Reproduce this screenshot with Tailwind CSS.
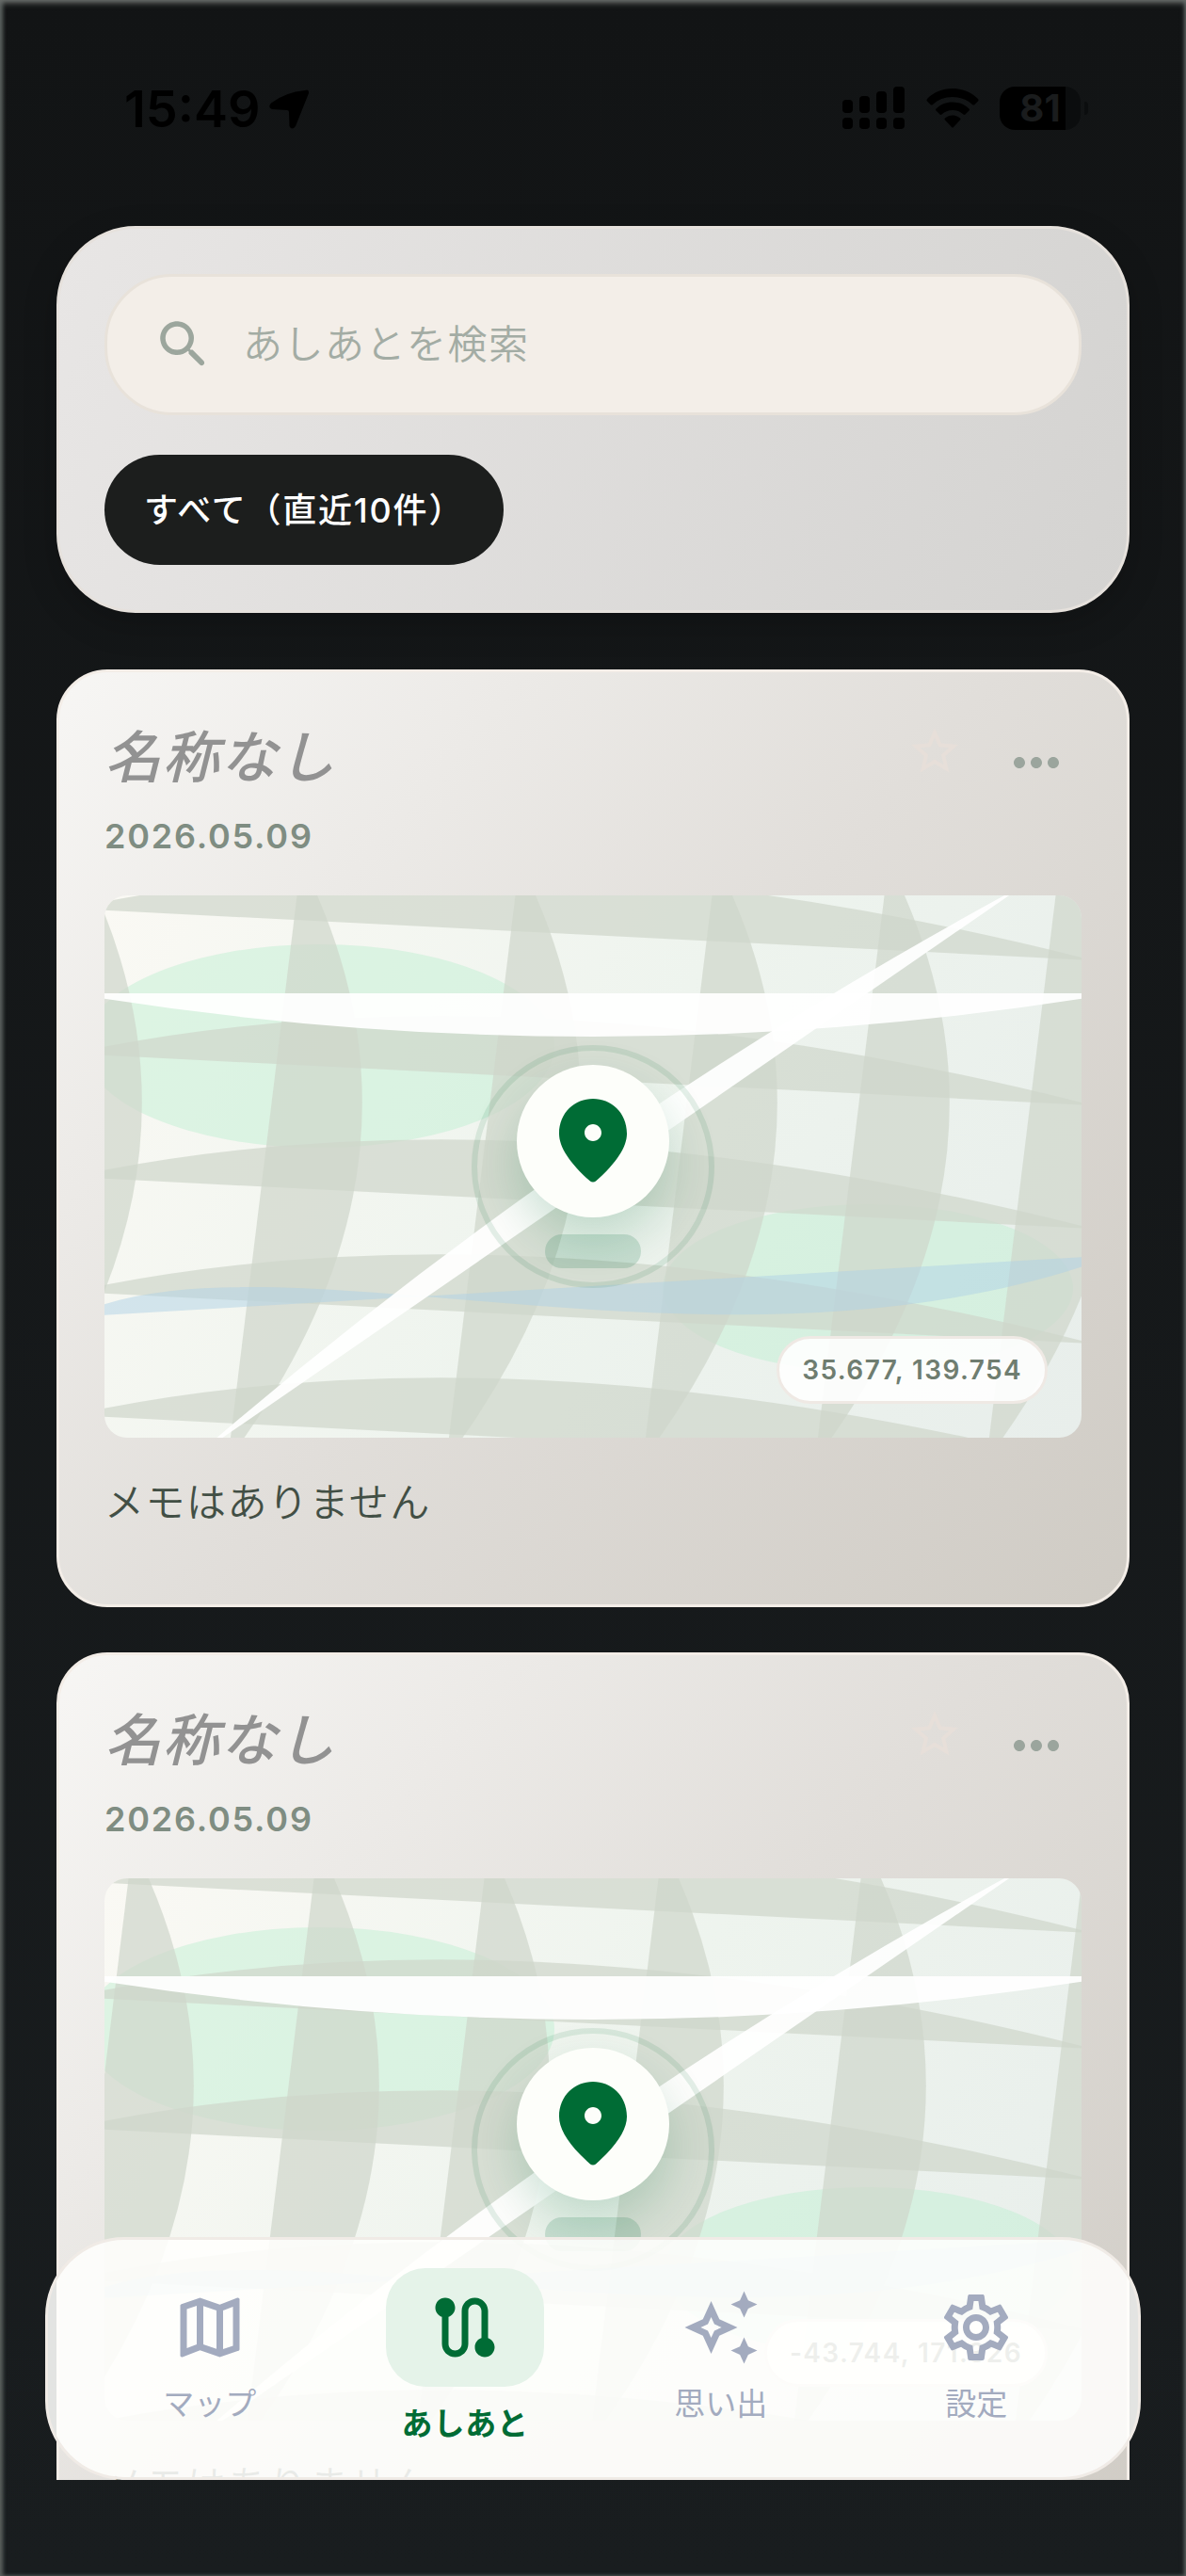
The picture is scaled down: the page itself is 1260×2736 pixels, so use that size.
<!DOCTYPE html>
<html lang="ja">

<head>
  <meta charset="UTF-8">
  <meta name="viewport" content="width=device-width, initial-scale=1.0">
  <title>あしあと</title>
  <script src="https://cdn.jsdelivr.net/npm/@tailwindcss/browser@4"></script>
</head>

<body class="font-['Inter','Noto_Sans_CJK_JP',sans-serif] bg-[#15181a]">
  <!-- Shared map shapes -->
  <svg class="hidden" aria-hidden="true">
    <defs>
      <path id="street-h" d="M-36 -2Q436 -103 1050 53Z" />
      <path id="street-v" d="M4 -36Q165 282 -74 600Z" />
      <g id="parks" fill="#c2efd4" fill-opacity="0.5">
        <ellipse cx="228" cy="160" rx="250" ry="108" />
        <ellipse cx="811" cy="417" rx="218" ry="89" />
      </g>
      <path id="river" fill="#b0d2e6" fill-opacity="0.5" d="M-36 448C180 345 654 537 1074 382Z" />
      <g id="avenues" fill="#fff" fill-opacity="0.93">
        <path d="M-36 104Q519 196 1074 104Z" />
        <path d="M95 597Q500 246 980 -13Z" />
      </g>
      <path id="pin" d="M12 12c1.1 0 2-.9 2-2s-.9-2-2-2-2 .9-2 2 .9 2 2 2zm0-10c4.2 0 8 3.22 8 8.2 0 3.18-2.45 6.92-7.34 11.23-.38.33-.95.33-1.33 0C6.45 17.12 4 13.38 4 10.2 4 5.22 7.8 2 12 2z" />
      <path id="star" d="M22 9.24l-7.19-.62L12 2 9.19 8.63 2 9.24l5.46 4.73L5.82 21 12 17.27 18.18 21l-1.63-7.03L22 9.24zM12 15.4l-3.76 2.27 1-4.28-3.32-2.88 4.38-.38L12 6.1l1.71 4.04 4.38.38-3.32 2.88 1 4.28L12 15.4z" />
      <path id="more" d="M6 10c-1.1 0-2 .9-2 2s.9 2 2 2 2-.9 2-2-.9-2-2-2zm12 0c-1.1 0-2 .9-2 2s.9 2 2 2 2-.9 2-2-.9-2-2-2zm-6 0c-1.1 0-2 .9-2 2s.9 2 2 2 2-.9 2-2-.9-2-2-2z" />
    </defs>
  </svg>

  <div class="relative flex h-screen flex-col bg-linear-to-b from-[#121415] to-[#191d1f] pb-[102px] shadow-[inset_0_3px_6px_#6b6f6c,inset_3px_0_4px_#4a504f,inset_-2px_0_3px_#3a4040]">
    <!-- Status bar -->
    <header class="flex h-60 shrink-0 items-start justify-between pl-[132px] pr-[104px] pt-[84px]">
      <div class="flex items-center gap-2 text-black">
        <span class="text-[54px]/[64px] font-semibold">15:49</span>
        <svg class="size-11" viewBox="0 0 44 44" fill="currentColor" aria-hidden="true">
          <path d="M39 2Q43.500 0 43 5L29 40Q25 45 22.500 40L22 25Q22 23 20 23L4 22Q-1 20 3 15.500Q18 4 39 2Z" />
        </svg>
      </div>
      <div class="flex items-center gap-[22px] pt-2 text-black">
        <svg class="h-[46px] w-[67px]" viewBox="0 0 67 46" fill="currentColor" aria-hidden="true">
          <rect x="0" y="14" width="11" height="14" rx="4" />
          <rect x="18" y="10" width="11" height="18" rx="4" />
          <rect x="36" y="5" width="11" height="23" rx="4" />
          <rect x="54" y="0" width="12" height="28" rx="4" />
          <rect x="0" y="33" width="11" height="12" rx="4" />
          <rect x="18" y="33" width="11" height="12" rx="4" />
          <rect x="36" y="33" width="11" height="12" rx="4" />
          <rect x="54" y="33" width="12" height="12" rx="4" />
        </svg>
        <svg class="h-[42px] w-14" viewBox="0 0 56 42" fill="currentColor" aria-hidden="true">
          <path d="M28 0C39 0 48.500 4.300 55 11Q56 12.500 55 13.500L51.500 17Q50.500 18 49 17C43.500 11.800 36.500 9 28 9S12.500 11.800 7 17Q5.500 18 4.500 17L1 13.500Q0 12.500 1 11C7.500 4.300 17 0 28 0Z" />
          <path d="M28 14.500C35 14.500 41 17 45.500 21.500Q46.500 22.500 45.500 23.500L41.500 27.500Q40.500 28.300 39.500 27.500C36.300 24.500 32.500 23 28 23S19.700 24.500 16.500 27.500Q15.500 28.300 14.500 27.500L10.500 23.500Q9.500 22.500 10.500 21.500C15 17 21 14.500 28 14.500Z" />
          <path d="M28 28.500C31 28.500 33.700 29.600 36 31.500Q37 32.500 36 33.500L29 41Q28 42 27 41L20 33.500Q19 32.500 20 31.500C22.300 29.600 25 28.500 28 28.500Z" />
        </svg>
        <div class="flex items-center gap-1">
          <div class="flex h-[46px] w-[86px] items-center justify-center rounded-2xl bg-linear-to-r from-black from-81% to-[#0b0d0e] to-81% text-[40px]/[46px] font-bold text-[#1a1c1d]">81</div>
          <div class="h-[14px] w-1 rounded-r-full bg-[#0b0d0e]"></div>
        </div>
      </div>
    </header>

    <main class="flex min-h-0 flex-1 flex-col px-[60px]">
      <!-- Search and filter -->
      <section class="shrink-0 rounded-[84px] border-3 border-[#e6e1dc] bg-linear-110 from-[#e8e6e5] to-[#d4d3d1] p-12 shadow-[0_12px_36px_rgba(0,0,0,0.2)]">
        <label class="flex h-[150px] items-center gap-[30px] rounded-[72px] border-3 border-[#e8e2da] bg-[#f3eee8] px-12">
          <svg class="size-[66px] shrink-0 text-[#9ca69d]" viewBox="0 0 24 24" fill="currentColor" aria-hidden="true">
            <path d="M15.5 14h-.79l-.28-.27c1.2-1.4 1.82-3.31 1.48-5.34-.47-2.78-2.79-5-5.59-5.34-4.23-.52-7.79 3.04-7.27 7.27.34 2.8 2.56 5.12 5.34 5.59 2.03.34 3.94-.28 5.34-1.48l.27.28v.79l4.25 4.25c.41.41 1.08.41 1.49 0 .41-.41.41-1.08 0-1.49L15.5 14zm-6 0C7.01 14 5 11.99 5 9.5S7.01 5 9.5 5 14 7.01 14 9.5 11.99 14 9.5 14z" />
          </svg>
          <input type="search" aria-label="あしあとを検索" placeholder="あしあとを検索" class="min-w-0 flex-1 text-[42px]/[66px] font-[350] tracking-[1.5px] text-[#424f45] outline-none placeholder:text-[#a3aca4]">
        </label>
        <button type="button" class="mt-[42px] block h-[117px] rounded-full bg-[#1c1e1d] px-[42px] text-[36px]/[54px] font-medium tracking-wider text-white">すべて（直近10件）</button>
      </section>

      <!-- Footprint list -->
      <div class="-mx-[60px] mt-[60px] flex min-h-0 flex-1 flex-col gap-12 overflow-hidden px-[60px]">
        <article class="shrink-0 rounded-[54px] border-3 border-[#f3ede7] bg-linear-131 from-[#f7f6f4] via-[#e1deda] to-[#cfcbc4] px-12 pb-[75px] pt-12">
          <div class="flex items-start justify-between">
            <div>
              <h2 class="text-[60px]/[84px] font-medium italic tracking-wide text-[#929292]">名称なし</h2>
              <p class="mt-[18px] text-[36px]/[48px] font-semibold tracking-wider text-[#7f8d82]">2026.05.09</p>
            </div>
            <div class="flex gap-3">
              <button type="button" aria-label="お気に入り" class="flex h-[72px] w-24 items-center justify-center text-[#e7dfd9]">
                <svg class="size-[60px]" viewBox="0 0 24 24" fill="currentColor"><use href="#star" /></svg>
              </button>
              <button type="button" aria-label="メニュー" class="flex size-24 items-center justify-center text-[#9ba59d]">
                <svg class="size-[72px]" viewBox="0 0 24 24" fill="currentColor"><use href="#more" /></svg>
              </button>
            </div>
          </div>
          <div class="relative mt-[39px] h-[576px] overflow-hidden rounded-3xl bg-linear-119 from-[#faf9f4] via-[#eef4ee] to-[#e8eeeb]">
            <svg class="size-full" viewBox="0 0 1038 576" preserveAspectRatio="none" aria-hidden="true">
              <use href="#parks" />
              <g fill="#cfd5cb" fill-opacity="0.7">
                <use href="#street-h" y="16" />
                <use href="#street-h" y="170" />
                <use href="#street-h" y="301" />
                <use href="#street-h" y="423" />
                <use href="#street-h" y="554" />
                <use href="#street-v" x="-29" />
                <use href="#street-v" x="205" />
                <use href="#street-v" x="437" />
                <use href="#street-v" x="646" />
                <use href="#street-v" x="829" />
                <use href="#street-v" x="1011" />
              </g>
              <use href="#river" />
              <use href="#avenues" />
            </svg>
            <div class="absolute inset-0 flex items-center justify-center">
              <div class="flex size-[258px] flex-col items-center justify-center gap-[18px] rounded-full border-6 border-[#006c35]/10">
                <div class="flex size-[162px] items-center justify-center rounded-full bg-[#fdfefa] shadow-[0_24px_54px_rgba(0,108,53,0.2)]">
                  <svg class="size-[108px] text-[#006c35]" viewBox="0 0 24 24" fill="currentColor" aria-hidden="true"><use href="#pin" /></svg>
                </div>
                <div class="h-9 w-[102px] rounded-full bg-[#006c35]/16"></div>
              </div>
            </div>
            <p class="absolute bottom-9 right-9 flex h-[72px] items-center rounded-full border-3 border-[#efe9e4] bg-white/90 px-6 text-[28px]/[36px] font-semibold tracking-wider text-[#6f7d70]">35.677, 139.754</p>
          </div>
          <p class="mt-9 text-[42px]/[66px] font-[350] tracking-[1.5px] text-[#424f45]">メモはありません</p>
        </article>

        <article class="shrink-0 rounded-[54px] border-3 border-[#f3ede7] bg-linear-131 from-[#f7f6f4] via-[#e1deda] to-[#cfcbc4] px-12 pb-[75px] pt-12">
          <div class="flex items-start justify-between">
            <div>
              <h2 class="text-[60px]/[84px] font-medium italic tracking-wide text-[#929292]">名称なし</h2>
              <p class="mt-[18px] text-[36px]/[48px] font-semibold tracking-wider text-[#7f8d82]">2026.05.09</p>
            </div>
            <div class="flex gap-3">
              <button type="button" aria-label="お気に入り" class="flex h-[72px] w-24 items-center justify-center text-[#e7dfd9]">
                <svg class="size-[60px]" viewBox="0 0 24 24" fill="currentColor"><use href="#star" /></svg>
              </button>
              <button type="button" aria-label="メニュー" class="flex size-24 items-center justify-center text-[#9ba59d]">
                <svg class="size-[72px]" viewBox="0 0 24 24" fill="currentColor"><use href="#more" /></svg>
              </button>
            </div>
          </div>
          <div class="relative mt-[39px] h-[576px] overflow-hidden rounded-3xl bg-linear-119 from-[#faf9f4] via-[#eef4ee] to-[#e8eeeb]">
            <svg class="size-full" viewBox="0 0 1038 576" preserveAspectRatio="none" aria-hidden="true">
              <use href="#parks" />
              <g fill="#cfd5cb" fill-opacity="0.7">
                <use href="#street-h" y="5" />
                <use href="#street-h" y="128" />
                <use href="#street-h" y="267" />
                <use href="#street-h" y="428" />
                <use href="#street-h" y="585" />
                <use href="#street-v" x="26" />
                <use href="#street-v" x="223" />
                <use href="#street-v" x="404" />
                <use href="#street-v" x="589" />
                <use href="#street-v" x="804" />
                <use href="#street-v" x="1039" />
              </g>
              <use href="#river" />
              <use href="#avenues" />
            </svg>
            <div class="absolute inset-0 flex items-center justify-center">
              <div class="flex size-[258px] flex-col items-center justify-center gap-[18px] rounded-full border-6 border-[#006c35]/10">
                <div class="flex size-[162px] items-center justify-center rounded-full bg-[#fdfefa] shadow-[0_24px_54px_rgba(0,108,53,0.2)]">
                  <svg class="size-[108px] text-[#006c35]" viewBox="0 0 24 24" fill="currentColor" aria-hidden="true"><use href="#pin" /></svg>
                </div>
                <div class="h-9 w-[102px] rounded-full bg-[#006c35]/16"></div>
              </div>
            </div>
            <p class="absolute bottom-9 right-9 flex h-[72px] items-center rounded-full border-3 border-[#efe9e4] bg-white/90 px-6 text-[28px]/[36px] font-semibold tracking-wider text-[#6f7d70]">-43.744, 171.326</p>
          </div>
          <p class="mt-9 text-[42px]/[66px] font-[350] tracking-[1.5px] text-[#424f45]">メモはありません</p>
        </article>
      </div>
    </main>

    <!-- Bottom navigation -->
    <nav class="absolute inset-x-12 bottom-[102px] grid h-[258px] grid-cols-4 items-start rounded-[84px] border-3 border-[#f0ebe6] bg-[#fffffd]/88 px-9 pt-[30px] text-[33px]/[42px] text-[#a3abbf]">
      <a href="#" class="mt-[21px] flex flex-col items-center gap-[18px]">
        <svg class="size-[84px]" viewBox="0 0 24 24" fill="currentColor" aria-hidden="true">
          <path d="M20.5 3l-.16.03L15 5.1 9 3 3.360 4.900c-.21.07-.36.25-.36.48V20.500c0 .28.22.5.5.5l.16-.03L9 18.900l6 2.100 5.640-1.900c.21-.07.36-.25.36-.48V3.500c0-.28-.22-.5-.5-.5zM10 5.470l4 1.400v11.660l-4-1.400V5.470zm-5 .99l3-1.010v11.700l-3 1.160V6.460zm14 11.080l-3 1.010V6.860l3-1.160v11.840z" />
        </svg>
        マップ
      </a>
      <a href="#" aria-current="page" class="flex flex-col items-center gap-[18px] font-bold tracking-wide text-[#006c35]">
        <span class="flex h-[126px] w-42 items-center justify-center rounded-[42px] bg-[#e5f3e9]">
          <svg class="size-[84px]" viewBox="0 0 24 24" fill="currentColor" aria-hidden="true">
            <path d="M19 15.180V7c0-2.210-1.790-4-4-4s-4 1.790-4 4v10c0 1.100-.9 2-2 2s-2-.9-2-2V8.820C8.160 8.400 9 7.300 9 6c0-1.660-1.340-3-3-3S3 4.340 3 6c0 1.300.84 2.400 2 2.820V17c0 2.210 1.790 4 4 4s4-1.790 4-4V7c0-1.100.9-2 2-2s2 .9 2 2v8.180c-1.160.41-2 1.510-2 2.820 0 1.660 1.340 3 3 3s3-1.340 3-3c0-1.300-.84-2.400-2-2.820z" />
          </svg>
        </span>
        あしあと
      </a>
      <a href="#" class="mt-[21px] flex flex-col items-center gap-[18px]">
        <svg class="size-[84px]" viewBox="0 0 24 24" fill="currentColor" aria-hidden="true">
          <path d="M19 9l1.250-2.750L23 5l-2.750-1.250L19 1l-1.250 2.750L15 5l2.750 1.250zM19 15l-1.250 2.750L15 19l2.750 1.250L19 23l1.250-2.750L23 19l-2.750-1.250zM11.500 9.500L9 4 6.500 9.500 1 12l5.500 2.500L9 20l2.500-5.500L17 12zm-1.510 3.490L9 15.170l-.99-2.180L5.830 12l2.180-.99L9 8.830l.99 2.180 2.180.99z" />
        </svg>
        思い出
      </a>
      <a href="#" class="mt-[21px] flex flex-col items-center gap-[18px]">
        <svg class="size-[84px]" viewBox="0 0 24 24" fill="currentColor" aria-hidden="true">
          <path d="M19.430 12.980c.04-.32.07-.64.07-.98 0-.34-.03-.66-.07-.98l2.110-1.650c.19-.15.24-.42.12-.64l-2-3.460c-.09-.16-.26-.25-.44-.25-.06 0-.12.01-.17.03l-2.490 1c-.52-.4-1.080-.73-1.690-.98l-.38-2.650C14.460 2.180 14.250 2 14 2h-4c-.25 0-.46.18-.49.42l-.38 2.650c-.61.25-1.170.59-1.690.98l-2.490-1c-.06-.02-.12-.03-.18-.03-.17 0-.34.09-.43.25l-2 3.460c-.13.22-.07.49.12.64l2.110 1.650c-.04.32-.07.65-.07.98 0 .33.03.66.07.98l-2.110 1.650c-.19.15-.24.42-.12.64l2 3.460c.09.16.26.25.44.25.06 0 .12-.01.17-.03l2.490-1c.52.4 1.080.73 1.690.98l.38 2.650c.03.24.24.42.49.42h4c.25 0 .46-.18.49-.42l.38-2.650c.61-.25 1.170-.59 1.690-.98l2.490 1c.06.02.12.03.18.03.17 0 .34-.09.43-.25l2-3.460c.12-.22.07-.49-.12-.64l-2.110-1.650zm-1.980-1.710c.04.31.05.52.05.73 0 .21-.02.43-.05.73l-.14 1.130.89.7 1.080.84-.7 1.210-1.270-.51-1.040-.42-.9.68c-.43.32-.84.56-1.250.73l-1.060.43-.16 1.130-.2 1.350h-1.400l-.19-1.350-.16-1.130-1.060-.43c-.43-.18-.83-.41-1.230-.71l-.91-.7-1.060.43-1.270.51-.7-1.210 1.080-.84.89-.7-.14-1.130c-.03-.31-.05-.54-.05-.74s.02-.43.05-.73l.14-1.130-.89-.7-1.080-.84.7-1.210 1.270.51 1.040.42.9-.68c.43-.32.84-.56 1.250-.73l1.060-.43.16-1.130.2-1.350h1.390l.19 1.350.16 1.130 1.060.43c.43.18.83.41 1.230.71l.91.7 1.060-.43 1.270-.51.7 1.210-1.070.85-.89.7.14 1.130zM12 8c-2.210 0-4 1.790-4 4s1.790 4 4 4 4-1.790 4-4-1.790-4-4-4zm0 6c-1.100 0-2-.9-2-2s.9-2 2-2 2 .9 2 2-.9 2-2 2z" />
        </svg>
        設定
      </a>
    </nav>
  </div>
</body>

</html>
